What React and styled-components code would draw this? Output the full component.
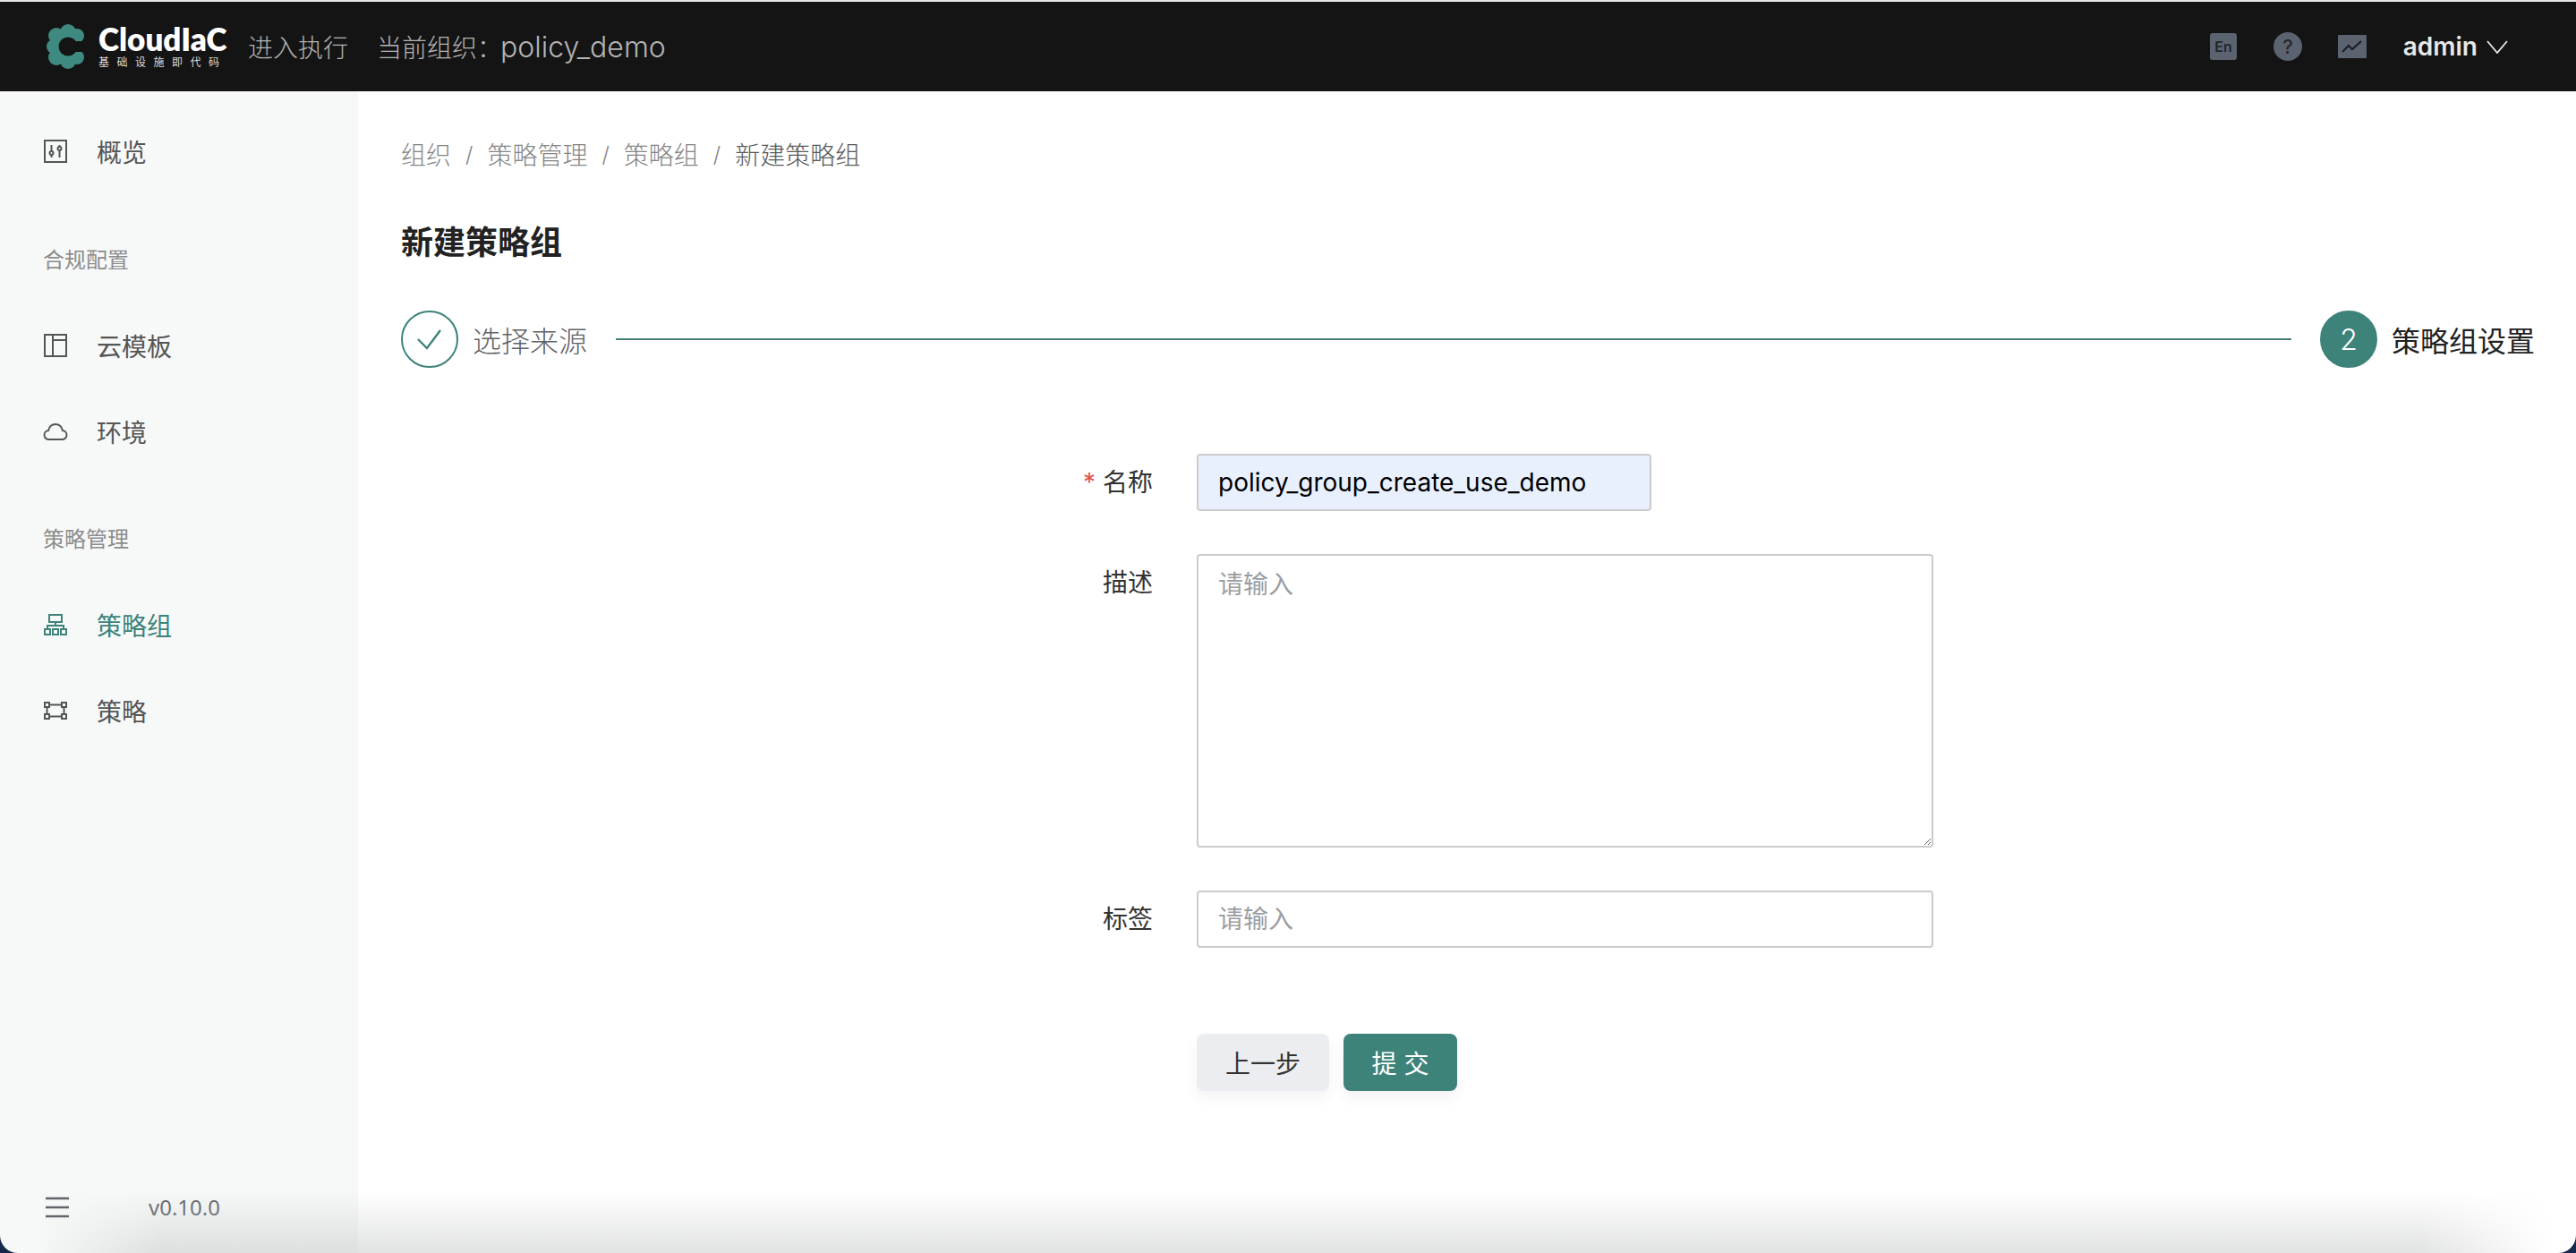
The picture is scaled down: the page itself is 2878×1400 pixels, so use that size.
import React from "react";
import styled, { createGlobalStyle } from "styled-components";

const FONT = `Inter, "Noto Sans CJK SC", sans-serif`;
const TEAL = "#3d837a";

const Global = createGlobalStyle`
  html, body {
    margin: 0;
    padding: 0;
    background: #fff;
  }
  body {
    font-family: ${FONT};
  }
  * {
    box-sizing: border-box;
  }
`;

const Page = styled.div`
  position: relative;
  width: 2878px;
  height: 1400px;
  display: flex;
  flex-direction: column;
  overflow: hidden;
  border-top: 2px solid #e6e6e6;
`;

const Header = styled.header`
  height: 100px;
  flex: none;
  background: #141414;
  display: flex;
  align-items: center;
  padding: 0 76px 0 52px;
`;

const Brand = styled.div`
  display: flex;
  align-items: center;
  gap: 13px;
  width: 225px;
`;

const BrandText = styled.div`
  display: flex;
  flex-direction: column;
  gap: 4px;
`;

const BrandName = styled.div`
  font: 800 35px/30px Lato, sans-serif;
  color: #fff;
`;

const BrandSub = styled.div`
  font: 12px/14px "Noto Sans CJK SC", sans-serif;
  letter-spacing: 8.500px;
  color: #ddd;
  white-space: nowrap;
`;

const HeadLink = styled.div`
  font-size: 28px;
  font-weight: 300;
  color: #b4b4b4;
  margin-right: ${(p) => p.$gap || 0}px;
  white-space: nowrap;
`;

const OrgName = styled.span`
  font-size: 32px;
  margin-left: -2px;
`;

const HeadRight = styled.div`
  margin-left: auto;
  display: flex;
  align-items: center;
`;

const HeadIcon = styled.svg`
  display: block;
  margin-right: ${(p) => p.$gap}px;
`;

const User = styled.div`
  font-size: 28px;
  font-weight: 600;
  color: #e8e8e8;
  display: flex;
  align-items: center;
  gap: 10px;
`;

const Body = styled.div`
  flex: 1;
  display: flex;
  min-height: 0;
`;

const Sidebar = styled.aside`
  width: 400px;
  flex: none;
  background: #f7f9f9;
  display: flex;
  flex-direction: column;
  padding: 39px 0 39px 48px;
`;

const NavItem = styled.div`
  height: 56px;
  display: flex;
  align-items: center;
  gap: 32px;
  font-size: 28px;
  color: ${(p) => (p.$active ? TEAL : "#555")};
  margin-bottom: ${(p) => p.$mb || 0}px;
`;

const NavGroup = styled.div`
  font-size: 24px;
  line-height: 32px;
  color: #8c8c8c;
  margin-bottom: ${(p) => p.$mb || 0}px;
`;

const SideFoot = styled.div`
  margin-top: auto;
  display: flex;
  align-items: center;
  gap: 89px;
  padding-left: 3px;
`;

const Version = styled.div`
  font: 24px/24px "Noto Sans", sans-serif;
  color: #5f6368;
`;

const Main = styled.main`
  flex: 1;
  min-width: 0;
  padding: 50px 46px 0 48px;
`;

const Crumbs = styled.nav`
  display: flex;
  align-items: center;
  height: 40px;
  font-size: 28px;
  font-weight: 300;
  color: #858585;
`;

const CrumbSep = styled.span`
  margin: 0 16px;
  font-size: 24px;
`;

const CrumbLast = styled.span`
  color: #595959;
`;

const Title = styled.h1`
  margin: 59px 0 0;
  font-size: 36px;
  line-height: 40px;
  font-weight: 700;
  color: #222;
`;

const Steps = styled.div`
  display: flex;
  align-items: center;
  margin-top: 56px;
  height: 64px;
`;

const StepCircle = styled.div`
  width: 64px;
  height: 64px;
  border-radius: 50%;
  flex: none;
  display: flex;
  align-items: center;
  justify-content: center;
  font-size: 32px;
  font-weight: 300;
  color: #fff;
  background: ${(p) => (p.$filled ? TEAL : "#fff")};
  border: 2px solid ${TEAL};
`;

const StepLabel = styled.div`
  font-size: 32px;
  font-weight: ${(p) => (p.$current ? 400 : 300)};
  margin-left: 16px;
  white-space: nowrap;
  color: ${(p) => (p.$current ? "#222" : "#5f6368")};
`;

const StepLine = styled.div`
  flex: 1;
  height: 2px;
  background: #4a7f78;
  margin: 0 32px;
`;

const Form = styled.form`
  margin-top: 96px;
  display: grid;
  grid-template-columns: 840px 823px;
  column-gap: 49px;
  row-gap: 48px;
`;

const Label = styled.label`
  font-size: 28px;
  font-weight: 400;
  color: #333;
  text-align: right;
  line-height: 64px;
`;

const Star = styled.span`
  color: #e5534b;
  margin-right: 8px;
  font-size: 28px;
`;

const Input = styled.input`
  display: block;
  width: ${(p) => p.$width || "100%"};
  height: 64px;
  padding: 0 22px;
  border: 2px solid #cccccc;
  border-radius: 4px;
  background: ${(p) => (p.$filled ? "#e8f0fe" : "#fff")};
  font: 28px ${FONT};
  color: #000;
  outline: none;
  &::placeholder {
    color: #9a9ea3;
    opacity: 1;
  }
`;

const TextArea = styled.textarea`
  display: block;
  width: 100%;
  height: 328px;
  padding: 12px 22px;
  border: 2px solid #cccccc;
  border-radius: 4px;
  font: 28px/40px ${FONT};
  outline: none;
  resize: vertical;
  &::placeholder {
    color: #9a9ea3;
    opacity: 1;
  }
`;

const Actions = styled.div`
  grid-column: 2;
  margin-top: 48px;
  display: flex;
  gap: 16px;
`;

const Button = styled.button`
  height: 64px;
  width: ${(p) => p.$width}px;
  border: 0;
  border-radius: 8px;
  font: 28px ${FONT};
  color: ${(p) => (p.$primary ? "#fff" : "#333")};
  background: ${(p) => (p.$primary ? TEAL : "#ecedf0")};
  box-shadow: 0 8px 16px rgba(0, 0, 0, 0.05);
`;

const BottomShade = styled.div`
  position: absolute;
  left: 0;
  right: 0;
  bottom: 0;
  height: 70px;
  pointer-events: none;
  background: linear-gradient(to bottom, rgba(200, 202, 202, 0), rgba(200, 202, 202, 0.55));
  -webkit-mask-image: linear-gradient(to right, transparent 40px, #000 180px, #000 2700px, transparent 2850px);
  mask-image: linear-gradient(to right, transparent 40px, #000 180px, #000 2700px, transparent 2850px);
`;

const CornerLeft = styled.svg`
  position: absolute;
  left: 0;
  bottom: 0;
`;

const CornerRight = styled.svg`
  position: absolute;
  right: 0;
  bottom: 0;
`;

const Logo = () => (
  <svg width="45" height="50" viewBox="0 0 45 50">
    <g fill="#3f8a80">
      <circle cx="24" cy="9" r="9" />
      <circle cx="34" cy="13" r="8" />
      <circle cx="11" cy="13" r="9" />
      <circle cx="8" cy="25" r="8" />
      <circle cx="11" cy="37" r="9" />
      <circle cx="24" cy="41" r="9" />
      <circle cx="34" cy="37" r="8" />
      <circle cx="23" cy="25" r="16" />
    </g>
    <circle cx="24" cy="25" r="10.500" fill="#141414" />
    <rect x="24" y="19" width="21" height="12" fill="#141414" />
  </svg>
);

const EnIcon = () => (
  <HeadIcon $gap={41} width="30" height="30" viewBox="0 0 30 30">
    <rect width="30" height="30" rx="3" fill="#5c6370" />
    <text x="15" y="21" textAnchor="middle" fontSize="16" fontWeight="600" fontFamily="Inter, sans-serif" fill="#23262b">
      En
    </text>
  </HeadIcon>
);

const HelpIcon = () => (
  <HeadIcon $gap={40} width="32" height="32" viewBox="0 0 32 32">
    <circle cx="16" cy="16" r="16" fill="#5c6370" />
    <text x="16" y="24" textAnchor="middle" fontSize="22" fontWeight="500" fontFamily="Inter, sans-serif" fill="#23262b">
      ?
    </text>
  </HeadIcon>
);

const ChartIcon = () => (
  <HeadIcon $gap={41} width="32" height="26" viewBox="0 0 32 26">
    <rect width="32" height="26" rx="1" fill="#5c6370" />
    <path d="M5 19l7-7 4 4 10-9" fill="none" stroke="#1b1d21" strokeWidth="2" />
  </HeadIcon>
);

const Chevron = () => (
  <svg width="24" height="15" viewBox="0 0 24 15">
    <path d="M1 1l11 13L23 1" fill="none" stroke="#e8e8e8" strokeWidth="1.8" />
  </svg>
);

const NavIcon = ({ children }) => (
  <svg width="28" height="28" viewBox="0 0 28 28" fill="none" stroke="currentColor" strokeWidth="2">
    {children}
  </svg>
);

const Check = () => (
  <svg width="30" height="24" viewBox="0 0 30 24">
    <path d="M2 12l10 10L27 2" fill="none" stroke={TEAL} strokeWidth="2.4" />
  </svg>
);

const MenuIcon = () => (
  <svg width="26" height="24" viewBox="0 0 26 24">
    <path d="M0 2h26M0 12h26M0 22h26" stroke="#5f6368" strokeWidth="2.4" />
  </svg>
);

export default function App() {
  return (
    <Page>
      <Global />
      <Header>
        <Brand>
          <Logo />
          <BrandText>
            <BrandName>CloudIaC</BrandName>
            <BrandSub>基础设施即代码</BrandSub>
          </BrandText>
        </Brand>
        <HeadLink $gap={32}>进入执行</HeadLink>
        <HeadLink>
          当前组织：<OrgName>policy_demo</OrgName>
        </HeadLink>
        <HeadRight>
          <EnIcon />
          <HelpIcon />
          <ChartIcon />
          <User>
            admin <Chevron />
          </User>
        </HeadRight>
      </Header>
      <Body>
        <Sidebar>
          <NavItem $mb={78}>
            <NavIcon>
              <rect x="2" y="2" width="24" height="24" />
              <path d="M9.500 7v14M18.500 7v14" />
              <circle cx="9.500" cy="16" r="2" fill="#f7f9f9" />
              <circle cx="18.500" cy="11" r="2" fill="#f7f9f9" />
            </NavIcon>
            概览
          </NavItem>
          <NavGroup $mb={51}>合规配置</NavGroup>
          <NavItem $mb={40}>
            <NavIcon>
              <rect x="2" y="2" width="24" height="24" />
              <path d="M11 2v24M11 8h15" />
            </NavIcon>
            云模板
          </NavItem>
          <NavItem $mb={77}>
            <NavIcon>
              <path d="M7 23a5 5 0 0 1-1-10c1-4 4-7 8-7s7 3 8 7a5 5 0 0 1-1 10z" />
            </NavIcon>
            环境
          </NavItem>
          <NavGroup $mb={51}>策略管理</NavGroup>
          <NavItem $active $mb={40}>
            <NavIcon>
              <rect x="7" y="3" width="14" height="8" />
              <path d="M14 11v4M5 18v-3h18v3" />
              <rect x="2" y="19" width="6" height="6" />
              <rect x="11" y="19" width="6" height="6" />
              <rect x="20" y="19" width="6" height="6" />
            </NavIcon>
            策略组
          </NavItem>
          <NavItem>
            <NavIcon>
              <rect x="2" y="5" width="5" height="5" />
              <rect x="21" y="5" width="5" height="5" />
              <rect x="2" y="18" width="5" height="5" />
              <rect x="21" y="18" width="5" height="5" />
              <path d="M7 7.500h14M7 20.500h14M4.500 10v8M23.500 10v8" />
            </NavIcon>
            策略
          </NavItem>
          <SideFoot>
            <MenuIcon />
            <Version>v0.10.0</Version>
          </SideFoot>
        </Sidebar>
        <Main>
          <Crumbs>
            组织
            <CrumbSep>/</CrumbSep>
            策略管理
            <CrumbSep>/</CrumbSep>
            策略组
            <CrumbSep>/</CrumbSep>
            <CrumbLast>新建策略组</CrumbLast>
          </Crumbs>
          <Title>新建策略组</Title>
          <Steps>
            <StepCircle>
              <Check />
            </StepCircle>
            <StepLabel>选择来源</StepLabel>
            <StepLine />
            <StepCircle $filled>2</StepCircle>
            <StepLabel $current>策略组设置</StepLabel>
          </Steps>
          <Form>
            <Label>
              <Star>*</Star>名称
            </Label>
            <div>
              <Input $filled $width="508px" defaultValue="policy_group_create_use_demo" />
            </div>
            <Label>描述</Label>
            <TextArea placeholder="请输入" />
            <Label>标签</Label>
            <Input placeholder="请输入" />
            <Actions>
              <Button type="button" $width={148}>
                上一步
              </Button>
              <Button type="button" $primary $width={127}>
                提 交
              </Button>
            </Actions>
          </Form>
        </Main>
      </Body>
      <BottomShade />
      <CornerLeft width="20" height="20" viewBox="0 0 20 20">
        <path d="M0 0a20 20 0 0 0 20 20H0z" fill="#16294a" />
      </CornerLeft>
      <CornerRight width="20" height="20" viewBox="0 0 20 20">
        <path d="M20 0a20 20 0 0 1-20 20h20z" fill="#16294a" />
      </CornerRight>
    </Page>
  );
}
